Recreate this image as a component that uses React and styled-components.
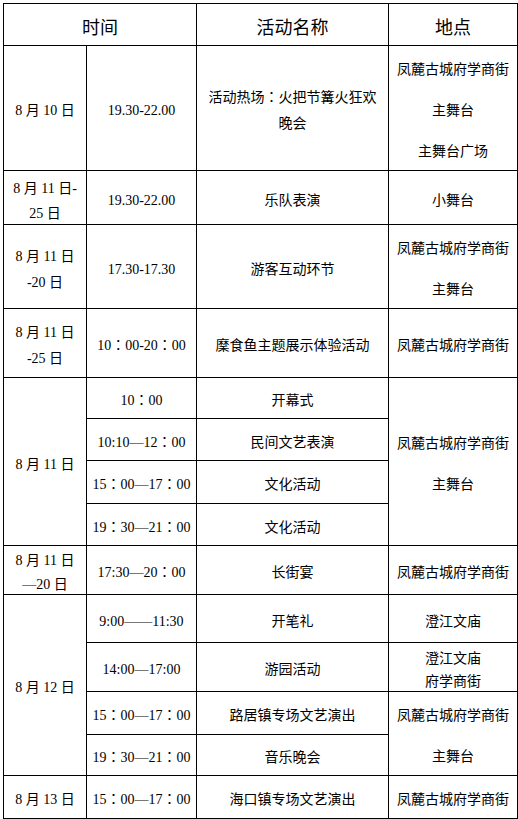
import React from "react";
import styled, { createGlobalStyle } from "styled-components";

const GlobalStyle = createGlobalStyle`
  body {
    margin: 0;
    background: #fff;
  }
`;

const Wrap = styled.div`
  padding: 3px 0 0 3px;
`;

const Table = styled.table`
  border-collapse: collapse;
  table-layout: fixed;
  width: 514px;
  font-family: "Liberation Serif", "Noto Sans CJK SC", serif;
  font-size: 14px;
  color: #000;
`;

const Row = styled.tr`
  height: ${(p) => p.$h}px;
`;

const Head = styled.th`
  border: 1px solid #000;
  font-weight: normal;
  font-size: 18px;
  line-height: 22px;
  padding: 0;
  text-align: center;
  vertical-align: middle;
`;

const Cell = styled.td`
  border: 1px solid #000;
  padding: 0 4px;
  text-align: center;
  vertical-align: middle;
  line-height: ${(p) => p.$lh || 20}px;
  white-space: nowrap;
`;

// the document's font sits a little lower in its line than Noto does
const Text = styled.div`
  transform: translateY(3px);
`;

const Blank = styled.span`
  display: block;
  height: ${(p) => p.$h || 20}px;
`;

// full-width colon drawn centred, as in the original document
const Colon = styled.span`
  font-family: "Noto Sans CJK JP", sans-serif;
  line-height: 0;
`;

const C = () => <Colon>：</Colon>;

const FENGLU = "凤麓古城府学商街";

function Td({ children, ...rest }) {
  return (
    <Cell {...rest}>
      <Text>{children}</Text>
    </Cell>
  );
}

function Stage({ lh = 20.5 }) {
  return (
    <>
      {FENGLU}
      <Blank $h={lh} />
      主舞台
    </>
  );
}

export default function App() {
  return (
    <Wrap>
      <GlobalStyle />
      <Table>
        <colgroup>
          <col style={{ width: 83 }} />
          <col style={{ width: 110 }} />
          <col style={{ width: 192 }} />
          <col style={{ width: 129 }} />
        </colgroup>
        <tbody>
          <Row $h={42}>
            <Head colSpan={2}>
              <Text>时间</Text>
            </Head>
            <Head>
              <Text>活动名称</Text>
            </Head>
            <Head>
              <Text>地点</Text>
            </Head>
          </Row>

          <Row $h={125}>
            <Td>8 月 10 日</Td>
            <Td>19.30-22.00</Td>
            <Td $lh={26}>
              活动热场<C />火把节篝火狂欢
              <br />
              晚会
            </Td>
            <Td $lh={20.5}>
              <Stage />
              <Blank $h={20.5} />
              主舞台广场
            </Td>
          </Row>

          <Row $h={54}>
            <Td $lh={25}>
              8 月 11 日-
              <br />
              25 日
            </Td>
            <Td>19.30-22.00</Td>
            <Td>乐队表演</Td>
            <Td>小舞台</Td>
          </Row>

          <Row $h={84}>
            <Td $lh={26}>
              8 月 11 日
              <br />
              -20 日
            </Td>
            <Td>17.30-17.30</Td>
            <Td>游客互动环节</Td>
            <Td $lh={20.5}>
              <Stage />
            </Td>
          </Row>

          <Row $h={69}>
            <Td $lh={26}>
              8 月 11 日
              <br />
              -25 日
            </Td>
            <Td>
              10<C />00-20<C />00
            </Td>
            <Td>穈食鱼主题展示体验活动</Td>
            <Td>{FENGLU}</Td>
          </Row>

          <Row $h={41}>
            <Td rowSpan={4}>8 月 11 日</Td>
            <Td>
              10<C />00
            </Td>
            <Td>开幕式</Td>
            <Td rowSpan={4} $lh={20.5}>
              <Stage />
            </Td>
          </Row>
          <Row $h={42}>
            <Td>
              10:10—12<C />00
            </Td>
            <Td>民间文艺表演</Td>
          </Row>
          <Row $h={43}>
            <Td>
              15<C />00—17<C />00
            </Td>
            <Td>文化活动</Td>
          </Row>
          <Row $h={42}>
            <Td>
              19<C />30—21<C />00
            </Td>
            <Td>文化活动</Td>
          </Row>

          <Row $h={49}>
            <Td $lh={24}>
              8 月 11 日
              <br />
              —20 日
            </Td>
            <Td>
              17:30—20<C />00
            </Td>
            <Td>长街宴</Td>
            <Td>{FENGLU}</Td>
          </Row>

          <Row $h={48}>
            <Td rowSpan={4}>8 月 12 日</Td>
            <Td>9:00——11:30</Td>
            <Td>开笔礼</Td>
            <Td>澄江文庙</Td>
          </Row>
          <Row $h={49}>
            <Td>14:00—17:00</Td>
            <Td>游园活动</Td>
            <Td $lh={23}>
              澄江文庙
              <br />
              府学商街
            </Td>
          </Row>
          <Row $h={43}>
            <Td>
              15<C />00—17<C />00
            </Td>
            <Td>路居镇专场文艺演出</Td>
            <Td rowSpan={2} $lh={20.5}>
              <Stage />
            </Td>
          </Row>
          <Row $h={41}>
            <Td>
              19<C />30—21<C />00
            </Td>
            <Td>音乐晚会</Td>
          </Row>

          <Row $h={43}>
            <Td>8 月 13 日</Td>
            <Td>
              15<C />00—17<C />00
            </Td>
            <Td>海口镇专场文艺演出</Td>
            <Td>{FENGLU}</Td>
          </Row>
        </tbody>
      </Table>
    </Wrap>
  );
}
